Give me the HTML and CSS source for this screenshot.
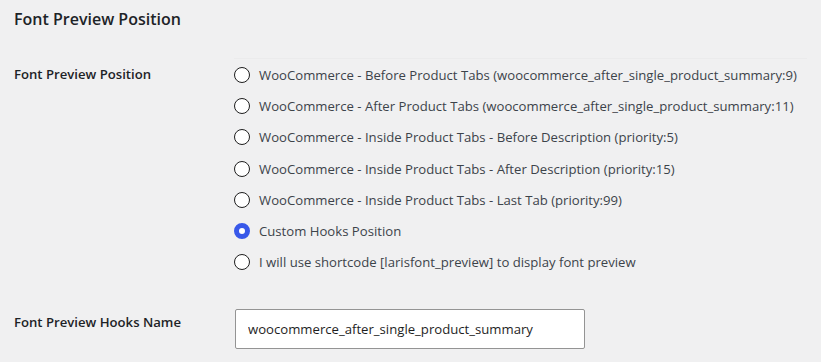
FILE: index.html
```html
<!DOCTYPE html>
<html lang="en">
<head>
    <meta charset="UTF-8">
    <meta name="viewport" content="width=device-width, initial-scale=1.0">
    <title>Font Preview Position</title>
    <link rel="stylesheet" href="styles.css">
</head>
<body>
    <div class="wrap">
        <h2>Font Preview Position</h2>
        <div class="form-table">
            <div class="row">
                <div class="th">Font Preview Position</div>
                <div class="td td-first">
                    <fieldset>
                        <label><input type="radio" name="pos" value="1"> WooCommerce - Before Product Tabs (woocommerce_after_single_product_summary:9)</label>
                        <label><input type="radio" name="pos" value="2"> WooCommerce - After Product Tabs (woocommerce_after_single_product_summary:11)</label>
                        <label><input type="radio" name="pos" value="3"> WooCommerce - Inside Product Tabs - Before Description (priority:5)</label>
                        <label><input type="radio" name="pos" value="4"> WooCommerce - Inside Product Tabs - After Description (priority:15)</label>
                        <label><input type="radio" name="pos" value="5"> WooCommerce - Inside Product Tabs - Last Tab (priority:99)</label>
                        <label><input type="radio" name="pos" value="6" checked> Custom Hooks Position</label>
                        <label><input type="radio" name="pos" value="7"> I will use shortcode [larisfont_preview] to display font preview</label>
                    </fieldset>
                </div>
            </div>
            <div class="row">
                <div class="th th-hooks">Font Preview Hooks Name</div>
                <div class="td">
                    <input type="text" class="regular-text" value="woocommerce_after_single_product_summary">
                </div>
            </div>
        </div>
    </div>
</body>
</html>
```

FILE: styles.css
```css
body {
    font-family: "Open Sans", "Noto Sans", sans-serif;
    font-size: 13.15px;
    background-color: #f0f0f1;
    color: #3c434a;
    margin: 0;
    padding: 0;
}
.wrap {
    padding: 0 14px;
}
h2 {
    font-size: 16px;
    font-weight: 600;
    color: #1d2327;
    margin: 8px 0 0;
    line-height: 22px;
}
.form-table {
    margin-top: 28px;
}
.row {
    display: grid;
    grid-template-columns: 220px 1fr;
}
.th {
    font-weight: 600;
    color: #1d2327;
    padding-top: 6px;
    line-height: 20px;
}
.th-hooks {
    padding-top: 34px;
}
.td-first {
    border-top: 1px solid #ebebec;
}
fieldset {
    border: none;
    margin: 0;
    padding: 0;
    display: flex;
    flex-direction: column;
}
fieldset label {
    display: flex;
    align-items: center;
    gap: 9px;
    height: 31.3px;
    color: #3c434a;
}
input[type="radio"] {
    appearance: none;
    width: 16px;
    height: 16px;
    margin: 0;
    border: 1.5px solid #1e1e1e;
    border-radius: 50%;
    background: #fff;
    flex-shrink: 0;
}
input[type="radio"]:checked {
    border: 5px solid #3858e9;
    background: #fff;
}
.regular-text {
    margin-top: 31px;
    margin-left: 1px;
    width: 350px;
    height: 40px;
    box-sizing: border-box;
    padding: 0 12px;
    font-family: inherit;
    font-size: 13.15px;
    color: #1e1e1e;
    background: #fff;
    border: 1px solid #949494;
    border-radius: 2px;
}
```
